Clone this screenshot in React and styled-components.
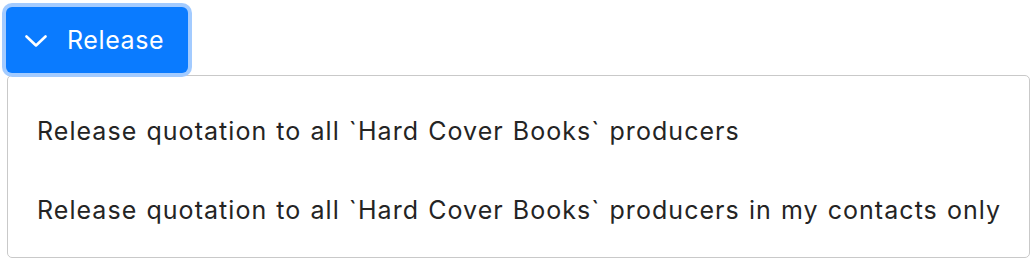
import React, { useState } from "react";
import styled, { createGlobalStyle } from "styled-components";

const GlobalStyle = createGlobalStyle`
	html, body {
		margin: 0;
		padding: 0;
		background: #ffffff;
	}
	body {
		font-family: Inter, "Liberation Sans", Arial, sans-serif;
		-webkit-font-smoothing: antialiased;
	}
`;

const options = [
	"Release quotation to all `Hard Cover Books` producers",
	"Release quotation to all `Hard Cover Books` producers in my contacts only",
];

const App = () => {
	const [open, setOpen] = useState(true);

	return (
		<>
			<GlobalStyle />
			<Wrapper>
				<ToggleButton onClick={() => setOpen(!open)}>
					<svg width="22" height="12" viewBox="0 0 22 12" fill="none">
						<path
							d="M1.5 1.5 L11 10.5 L20.5 1.5"
							stroke="#ffffff"
							strokeWidth="2.6"
							strokeLinecap="round"
							strokeLinejoin="round"
						/>
					</svg>
					<span>Release</span>
				</ToggleButton>
				{open && (
					<Menu>
						{options.map((text) => (
							<MenuItem key={text}>{text}</MenuItem>
						))}
					</Menu>
				)}
			</Wrapper>
		</>
	);
};

export default App;

const Wrapper = styled.div`
	display: flex;
	flex-direction: column;
	align-items: flex-start;
	padding: 7px 3px 0 6px;
	gap: 2px;
`;

const ToggleButton = styled.button`
	display: flex;
	align-items: center;
	gap: 20px;
	width: 182px;
	height: 66px;
	padding: 0 0 0 19px;
	border: none;
	border-radius: 6px;
	background-color: #0a7bff;
	color: #ffffff;
	font-family: inherit;
	font-size: 25px;
	letter-spacing: 0.6px;
	cursor: pointer;
	box-shadow: 0 0 0 4px #a3cbff;
	position: relative;
	z-index: 1;

	svg {
		margin-top: 1px;
		flex-shrink: 0;
	}
`;

const Menu = styled.ul`
	box-sizing: border-box;
	list-style: none;
	margin: 0 0 0 1px;
	padding: 15px 0 8px;
	width: 1023px;
	border: 1px solid #c9c9c9;
	border-radius: 5px;
	background: #ffffff;
`;

const MenuItem = styled.li`
	display: flex;
	align-items: center;
	height: 79px;
	padding-left: 29px;
	font-size: 25px;
	letter-spacing: 1.05px;
	word-spacing: 1px;
	color: #242424;
	white-space: nowrap;
`;
